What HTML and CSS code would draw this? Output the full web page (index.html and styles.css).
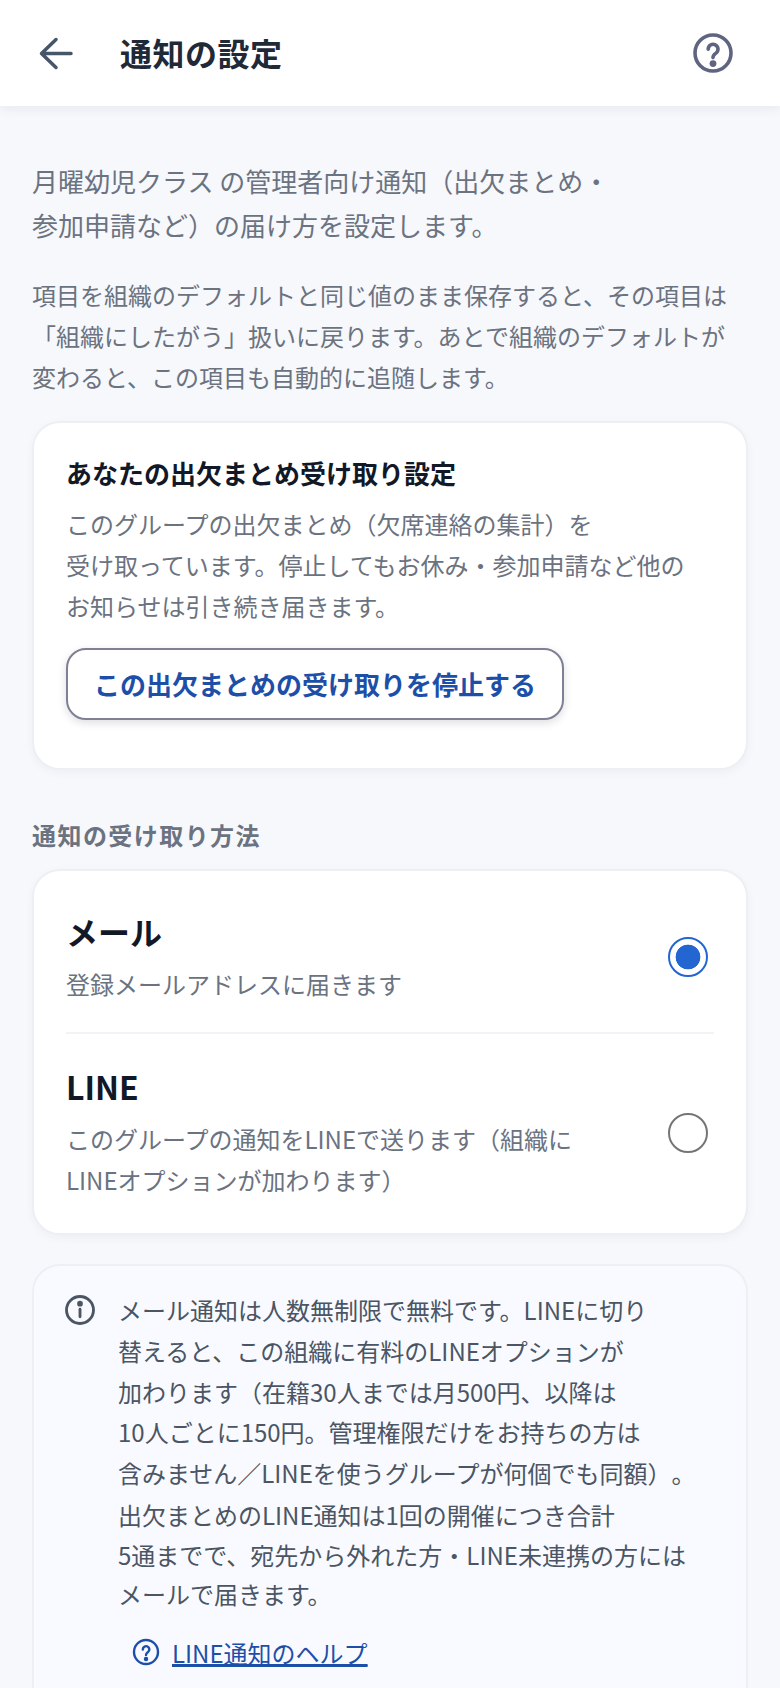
FILE: index.html
```html
<!DOCTYPE html>
<html lang="ja">
<head>
<meta charset="utf-8">
<title>通知の設定</title>
<link rel="stylesheet" href="styles.css">
</head>
<body>
<header class="appbar">
  <button class="icon-btn back" aria-label="戻る">
    <svg width="48" height="48" viewBox="0 0 48 48" fill="none" stroke="currentColor" stroke-width="3.5" stroke-linecap="round" stroke-linejoin="round"><path d="M39 24.5H10M24 10.5 9.5 24.5 24 38.5"/></svg>
  </button>
  <h1 class="appbar-title">通知の設定</h1>
  <button class="icon-btn help" aria-label="ヘルプ">
    <svg width="48" height="48" viewBox="0 0 48 48" fill="none" stroke="currentColor" stroke-width="3.6" stroke-linecap="round"><circle cx="24" cy="24" r="18"/><path d="M19.2 20.2a4.9 4.9 0 1 1 7.8 3.9c-2 1.4-3 2.3-3 4.5"/><circle cx="24" cy="34.6" r="3.4" fill="currentColor" stroke="none"/></svg>
  </button>
</header>
<main class="content">
  <p class="lead">月曜幼児クラス の管理者向け通知（出欠まとめ・<br>参加申請など）の届け方を設定します。</p>
  <p class="note">項目を組織のデフォルトと同じ値のまま保存すると、その項目は<br>「組織にしたがう」扱いに戻ります。あとで組織のデフォルトが<br>変わると、この項目も自動的に追随します。</p>

  <section class="card summary">
    <h2 class="card-title">あなたの出欠まとめ受け取り設定</h2>
    <p class="card-text">このグループの出欠まとめ（欠席連絡の集計）を<br>受け取っています。停止してもお休み・参加申請など他の<br>お知らせは引き続き届きます。</p>
    <button class="outline-btn">この出欠まとめの受け取りを停止する</button>
  </section>

  <h3 class="section-label">通知の受け取り方法</h3>
  <section class="card options">
    <div class="option">
      <div class="option-body">
        <div class="option-name">メール</div>
        <div class="option-desc">登録メールアドレスに届きます</div>
      </div>
      <span class="radio checked"></span>
    </div>
    <div class="option">
      <div class="option-body">
        <div class="option-name">LINE</div>
        <div class="option-desc">このグループの通知をLINEで送ります（組織に<br>LINEオプションが加わります）</div>
      </div>
      <span class="radio"></span>
    </div>
  </section>

  <section class="card info">
    <svg class="info-icon" width="36" height="36" viewBox="0 0 48 48" fill="none" stroke="currentColor" stroke-width="3.8" stroke-linecap="round"><circle cx="24" cy="24" r="18"/><path d="M24 23v10"/><circle cx="24" cy="15.5" r="3.8" fill="currentColor" stroke="none"/></svg>
    <div class="info-body">
      <p class="info-text">メール通知は人数無制限で無料です。LINEに切り<br>替えると、この組織に有料のLINEオプションが<br>加わります（在籍30人までは月500円、以降は<br>10人ごとに150円。管理権限だけをお持ちの方は<br>含みません／LINEを使うグループが何個でも同額）。</p>
      <p class="info-text second">出欠まとめのLINE通知は1回の開催につき合計<br>5通までで、宛先から外れた方・LINE未連携の方には<br>メールで届きます。</p>
      <a class="help-link" href="#">
        <svg width="32" height="32" viewBox="0 0 48 48" fill="none" stroke="currentColor" stroke-width="3.6" stroke-linecap="round"><circle cx="24" cy="24" r="18"/><path d="M19.2 20.2a4.9 4.9 0 1 1 7.8 3.9c-2 1.4-3 2.3-3 4.5"/><circle cx="24" cy="34.6" r="3.4" fill="currentColor" stroke="none"/></svg>
        <span>LINE通知のヘルプ</span>
      </a>
    </div>
  </section>
</main>
</body>
</html>
```
FILE: styles.css
```css
* { box-sizing: border-box; }
html, body { margin: 0; padding: 0; }
body {
  height: 1688px;
  overflow: hidden;
  background: #f6f8fc;
  color: #111827;
  font-family: "Noto Sans CJK JP", "Noto Sans", sans-serif;
}
p, h1, h2, h3 { margin: 0; }
.appbar {
  height: 106px;
  background: #fff;
  display: flex;
  align-items: center;
  padding: 0 43px 0 32px;
  box-shadow: 0 2px 12px rgba(17, 24, 39, .08);
  position: relative;
}
.icon-btn {
  width: 48px;
  height: 48px;
  padding: 0;
  border: 0;
  background: none;
  display: flex;
  color: #475569;
}
.back { margin-right: 40px; }
.help { margin-left: auto; color: #5f6580; }
.appbar-title { font-size: 32px; font-weight: 700; line-height: 44px; color: #1f2937; letter-spacing: .48px; padding-bottom: 2px; }
.content { padding: 53px 32px 0; }
.lead { font-size: 26px; line-height: 44px; color: #6b7280; margin-bottom: 27px; }
.note { font-size: 24px; line-height: 41px; color: #6b7280; margin-bottom: 24px; }
.card {
  background: #fff;
  border: 2px solid #eceff4;
  border-radius: 28px;
  box-shadow: 0 3px 10px rgba(17, 24, 39, .04);
}
.summary { padding: 30px 32px 48px; margin-bottom: 47px; }
.card-title { font-size: 26px; line-height: 40px; font-weight: 700; margin-bottom: 10px; }
.card-text { font-size: 24px; line-height: 41px; color: #6b7280; margin-bottom: 22px; }
.outline-btn {
  display: block;
  height: 72px;
  padding: 0 26px;
  font: 700 26px/1 "Noto Sans CJK JP", sans-serif;
  color: #1e4fa8;
  background: #fff;
  border: 2px solid #7f7f96;
  border-radius: 20px;
  box-shadow: 0 3px 8px rgba(17, 24, 39, .14);
}
.section-label { font-size: 24px; line-height: 36px; font-weight: 700; letter-spacing: 1.44px; color: #6b7280; margin-bottom: 16px; }
.options { padding: 8px 32px 5px; margin-bottom: 29px; }
.option { display: flex; align-items: center; justify-content: space-between; padding: 28px 0; }
.option + .option { border-top: 2px solid #f1f3f6; }
.option-name { font-size: 32px; line-height: 48px; font-weight: 700; margin-bottom: 8px; }
.option-desc { font-size: 24px; line-height: 41px; color: #6b7280; }
.radio { width: 40px; height: 40px; border-radius: 50%; border: 2px solid #757575; margin: 3px 6px 0 0; flex: none; background: #fff; }
.radio.checked { border-color: #2366d1; background: radial-gradient(circle, #2366d1 0 12px, #fff 12.7px); }
.info { background: #f8faff; padding: 24px 28px 0; display: flex; gap: 20px; height: 500px; box-shadow: none; }
.info-icon { color: #4b5563; flex: none; margin-top: 2px; }
.info-body { color: #4b5563; }
.info-text { font-size: 24px; line-height: 40.8px; text-spacing-trim: space-all; }
.info-text.second { margin-top: 1px; line-height: 39.6px; }
.help-link { display: inline-flex; align-items: center; gap: 10px; margin: 18px 0 0 12px; color: #1e4fa8; font-size: 24px; line-height: 41px; }
.help-link span { text-decoration: underline; text-decoration-thickness: 2px; }
```
